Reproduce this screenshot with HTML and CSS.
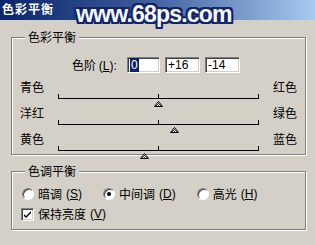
FILE: index.html
```html
<!DOCTYPE html>
<html lang="zh-CN">

<head>
    <meta charset="UTF-8">
    <title>色彩平衡</title>
    <link rel="stylesheet" href="styles.css">
</head>

<body>

    <div class="window">
        <!-- Title bar -->
        <div class="titlebar">色彩平衡</div>
        <div class="watermark">www.68ps.com</div>

        <!-- Colour balance group -->
        <fieldset class="group group-balance">
            <legend>色彩平衡</legend>

            <div class="level-row">
                <span class="level-label">色阶 <span class="key">(<u>L</u>):</span></span>
                <div class="field field-first"><span class="selected">0</span></div>
                <div class="field">+16</div>
                <div class="field">-14</div>
            </div>

            <div class="slider-row">
                <span class="side-label">青色</span>
                <div class="track">
                    <span class="tick tick-left"></span>
                    <span class="tick tick-mid"></span>
                    <span class="tick tick-right"></span>
                    <svg class="thumb" style="left: 96px" width="9" height="6" viewBox="0 0 9 6">
                        <polygon points="4.5,0.5 8.5,5.5 0.5,5.5" fill="url(#dots)" stroke="#000" stroke-width="1"/>
                    </svg>
                </div>
                <span class="side-label right">红色</span>
            </div>

            <div class="slider-row">
                <span class="side-label">洋红</span>
                <div class="track">
                    <span class="tick tick-left"></span>
                    <span class="tick tick-mid"></span>
                    <span class="tick tick-right"></span>
                    <svg class="thumb" style="left: 112px" width="9" height="6" viewBox="0 0 9 6">
                        <polygon points="4.5,0.5 8.5,5.5 0.5,5.5" fill="url(#dots)" stroke="#000" stroke-width="1"/>
                    </svg>
                </div>
                <span class="side-label right">绿色</span>
            </div>

            <div class="slider-row">
                <span class="side-label">黄色</span>
                <div class="track">
                    <span class="tick tick-left"></span>
                    <span class="tick tick-mid"></span>
                    <span class="tick tick-right"></span>
                    <svg class="thumb" style="left: 82px" width="9" height="6" viewBox="0 0 9 6">
                        <polygon points="4.5,0.5 8.5,5.5 0.5,5.5" fill="url(#dots)" stroke="#000" stroke-width="1"/>
                    </svg>
                </div>
                <span class="side-label right">蓝色</span>
            </div>
        </fieldset>

        <!-- Tone balance group -->
        <fieldset class="group group-tone">
            <legend>色调平衡</legend>

            <div class="radio-row">
                <label class="option"><span class="radio"></span>暗调 <span class="key">(<u>S</u>)</span></label>
                <label class="option"><span class="radio checked"></span>中间调 <span class="key">(<u>D</u>)</span></label>
                <label class="option"><span class="radio"></span>高光 <span class="key">(<u>H</u>)</span></label>
            </div>

            <label class="option keep">
                <span class="checkbox">
                    <svg width="9" height="9" viewBox="0 0 9 9">
                        <path d="M1 4 L3 6 L8 1 L8 3 L3 8 L1 6 Z" fill="#000"/>
                    </svg>
                </span>保持亮度 <span class="key">(<u>V</u>)</span>
            </label>
        </fieldset>
    </div>

    <!-- shared hatch pattern for slider thumbs -->
    <svg width="0" height="0" class="defs">
        <defs>
            <pattern id="dots" width="2" height="2" patternUnits="userSpaceOnUse">
                <rect width="2" height="2" fill="#fff"/>
                <rect width="1" height="1" fill="#404040"/>
                <rect x="1" y="1" width="1" height="1" fill="#404040"/>
            </pattern>
        </defs>
    </svg>

</body>

</html>
```

FILE: styles.css
```css
/* General Reset */
* {
    margin: 0;
    padding: 0;
    box-sizing: border-box;
}

body {
    background-color: #d4d0c8;
    font-family: "Noto Sans CJK SC", "Liberation Sans", sans-serif;
    font-size: 12px;
    color: #000;
}

.window {
    position: relative;
    width: 315px;
    height: 245px;
    background-color: #d4d0c8;
    overflow: hidden;
}

/* Title bar */
.titlebar {
    height: 20px;
    padding-left: 2px;
    background: linear-gradient(to right, #0a246a, #3a5a9a 45%, #a6caf0);
    color: #fff;
    font-weight: bold;
    font-size: 12px;
    line-height: 18px;
    letter-spacing: 1px;
}

/* Watermark lies over the title bar */
.watermark {
    position: absolute;
    left: 76px;
    top: 1px;
    font-family: "Liberation Sans", sans-serif;
    font-weight: bold;
    font-size: 23px;
    letter-spacing: -0.8px;
    color: #f4f8ff;
    text-shadow:
        2px 0 0 #14246a, -2px 0 0 #14246a, 0 2px 0 #14246a, 0 -2px 0 #14246a,
        2px 2px 0 #14246a, -2px -2px 0 #14246a, 2px -2px 0 #14246a, -2px 2px 0 #14246a;
}

/* Mnemonic keys use narrow latin parentheses */
.key {
    font-family: "Liberation Sans", sans-serif;
    font-size: 12px;
}

/* Group boxes */
.group {
    width: 295px;
    margin-left: 11px;
    border: 1px solid #808080;
    box-shadow: 1px 1px 0 #fff, inset 1px 1px 0 #fff;
}

.group legend {
    margin-left: 13px;
    padding: 0 3px;
    line-height: 14px;
    font-size: 12px;
    background-color: #d4d0c8;
}

.group-balance {
    margin-top: 10px;
    height: 125px;
}

.group-tone {
    margin-top: 9px;
    height: 66px;
}

/* Level inputs */
.level-row {
    display: flex;
    align-items: center;
    gap: 5px;
    margin-top: 12px;
    padding-left: 60px;
}

.level-label {
    width: 50px;
}

.field {
    width: 35px;
    height: 16px;
    padding-left: 2px;
    background-color: #fff;
    border: 1px solid;
    border-color: #808080 #fff #fff #808080;
    box-shadow: inset 1px 1px 0 #404040, inset -1px -1px 0 #d4d0c8;
    line-height: 14px;
    font-family: "Liberation Sans", sans-serif;
    font-size: 12px;
}

.field-first {
    width: 33px;
}

.selected {
    background-color: #0a246a;
    color: #fff;
    padding: 0 1px;
}

/* Slider rows */
.slider-row {
    display: flex;
    height: 26px;
    padding-left: 8px;
}

.level-row + .slider-row {
    margin-top: 7px;
}

.side-label {
    width: 38px;
    line-height: 14px;
}

.side-label.right {
    width: auto;
    margin-left: 14px;
}

.track {
    position: relative;
    width: 201px;
    height: 26px;
}

.track::before {
    content: "";
    position: absolute;
    left: 0;
    right: 0;
    top: 18px;
    height: 1px;
    background-color: #000;
}

.tick {
    position: absolute;
    top: 14px;
    width: 1px;
    height: 4px;
    background-color: #000;
}

.tick-left {
    left: 0;
}

.tick-mid {
    left: 100px;
}

.tick-right {
    right: 0;
}

.thumb {
    position: absolute;
    top: 21px;
}

/* Radios and checkbox */
.radio-row {
    display: flex;
    align-items: center;
    margin-top: 8px;
    padding-left: 10px;
    gap: 21px;
}

.option {
    display: flex;
    align-items: center;
    gap: 4px;
    height: 16px;
    line-height: 14px;
}

.radio {
    width: 12px;
    height: 12px;
    border-radius: 50%;
    background-color: #fff;
    border: 1px solid;
    border-color: #808080 #fff #fff #808080;
    box-shadow: inset 1px 1px 0 #404040;
    position: relative;
}

.radio.checked::after {
    content: "";
    position: absolute;
    left: 3px;
    top: 3px;
    width: 4px;
    height: 4px;
    border-radius: 50%;
    background-color: #000;
}

.keep {
    margin-top: 4px;
    padding-left: 9px;
}

.checkbox {
    display: flex;
    align-items: center;
    justify-content: center;
    width: 13px;
    height: 13px;
    background-color: #fff;
    border: 1px solid;
    border-color: #808080 #fff #fff #808080;
    box-shadow: inset 1px 1px 0 #404040, inset -1px -1px 0 #d4d0c8;
}

.defs {
    position: absolute;
}
```
